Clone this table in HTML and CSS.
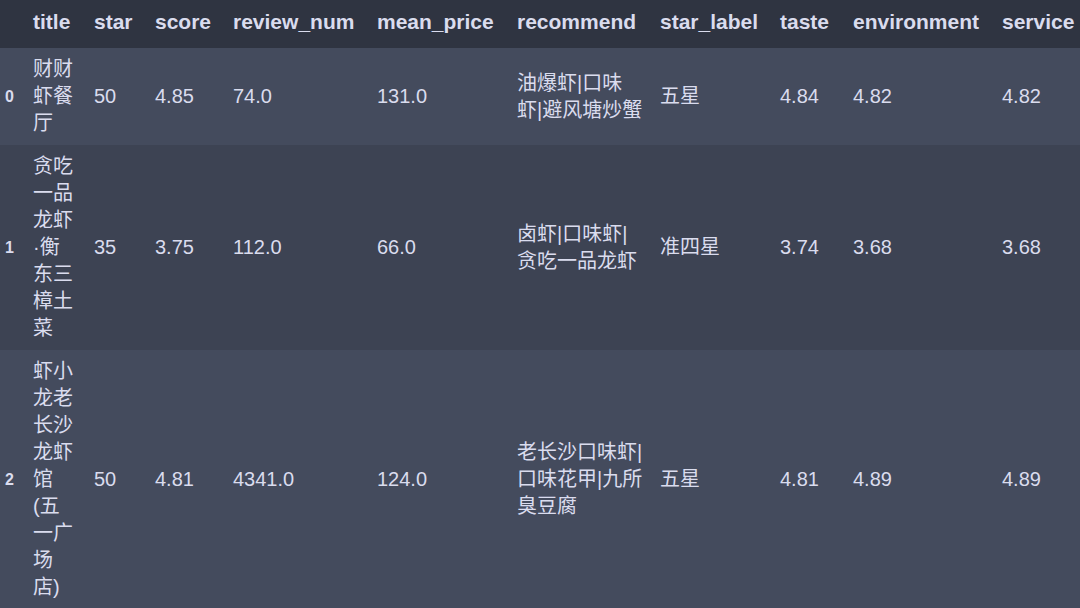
FILE: index.html
```html
<!DOCTYPE html>
<html lang="en">
<head>
    <meta charset="UTF-8">
    <meta name="viewport" content="width=device-width, initial-scale=1.0">
    <link rel="stylesheet" href="styles.css">
</head>
<body>
    <table class="dataframe">
        <colgroup>
            <col class="c-index">
            <col class="c-title">
            <col class="c-star">
            <col class="c-score">
            <col class="c-review">
            <col class="c-price">
            <col class="c-recommend">
            <col class="c-label">
            <col class="c-taste">
            <col class="c-env">
            <col class="c-service">
        </colgroup>
        <thead>
            <tr>
                <th></th>
                <th>title</th>
                <th>star</th>
                <th>score</th>
                <th>review_num</th>
                <th>mean_price</th>
                <th>recommend</th>
                <th>star_label</th>
                <th>taste</th>
                <th>environment</th>
                <th>service</th>
            </tr>
        </thead>
        <tbody>
            <tr>
                <th class="idx">0</th>
                <td>财财<br>虾餐<br>厅</td>
                <td>50</td>
                <td>4.85</td>
                <td>74.0</td>
                <td>131.0</td>
                <td>油爆虾|口味<br>虾|避风塘炒蟹</td>
                <td>五星</td>
                <td>4.84</td>
                <td>4.82</td>
                <td>4.82</td>
            </tr>
            <tr>
                <th class="idx">1</th>
                <td>贪吃<br>一品<br>龙虾<br>·衡<br>东三<br>樟土<br>菜</td>
                <td>35</td>
                <td>3.75</td>
                <td>112.0</td>
                <td>66.0</td>
                <td>卤虾|口味虾|<br>贪吃一品龙虾</td>
                <td>准四星</td>
                <td>3.74</td>
                <td>3.68</td>
                <td>3.68</td>
            </tr>
            <tr>
                <th class="idx">2</th>
                <td>虾小<br>龙老<br>长沙<br>龙虾<br>馆<br>(五<br>一广<br>场<br>店)</td>
                <td>50</td>
                <td>4.81</td>
                <td>4341.0</td>
                <td>124.0</td>
                <td>老长沙口味虾|<br>口味花甲|九所<br>臭豆腐</td>
                <td>五星</td>
                <td>4.81</td>
                <td>4.89</td>
                <td>4.89</td>
            </tr>
        </tbody>
    </table>
</body>
</html>
```

FILE: styles.css
```css
body {
    margin: 0;
    padding: 0;
    width: 1080px;
    height: 608px;
    overflow: hidden;
    background-color: #434a5c;
    font-family: "Liberation Sans", "Noto Sans CJK SC", sans-serif;
    color: #dadcee;
}
.dataframe {
    border-collapse: collapse;
    table-layout: fixed;
    width: 1092px;
}
.c-index { width: 23px; }
.c-title { width: 61px; }
.c-star { width: 61px; }
.c-score { width: 78px; }
.c-review { width: 144px; }
.c-price { width: 140px; }
.c-recommend { width: 143px; }
.c-label { width: 120px; }
.c-taste { width: 73px; }
.c-env { width: 149px; }
.c-service { width: 100px; }
.dataframe thead tr {
    background-color: #2f3441;
}
.dataframe thead th {
    font-size: 21px;
    font-weight: bold;
    line-height: 27px;
    text-align: left;
    padding: 8px 10px 13px 10px;
    white-space: nowrap;
}
.dataframe tbody tr:nth-child(odd) {
    background-color: #444b5d;
}
.dataframe tbody tr:nth-child(even) {
    background-color: #3d4353;
}
.dataframe td {
    font-size: 20px;
    line-height: 27px;
    padding: 8px 10px;
    text-align: left;
    vertical-align: middle;
    white-space: nowrap;
}
.dataframe th.idx {
    font-size: 16px;
    font-weight: bold;
    text-align: left;
    padding: 8px 0 8px 5px;
    vertical-align: middle;
}
```
